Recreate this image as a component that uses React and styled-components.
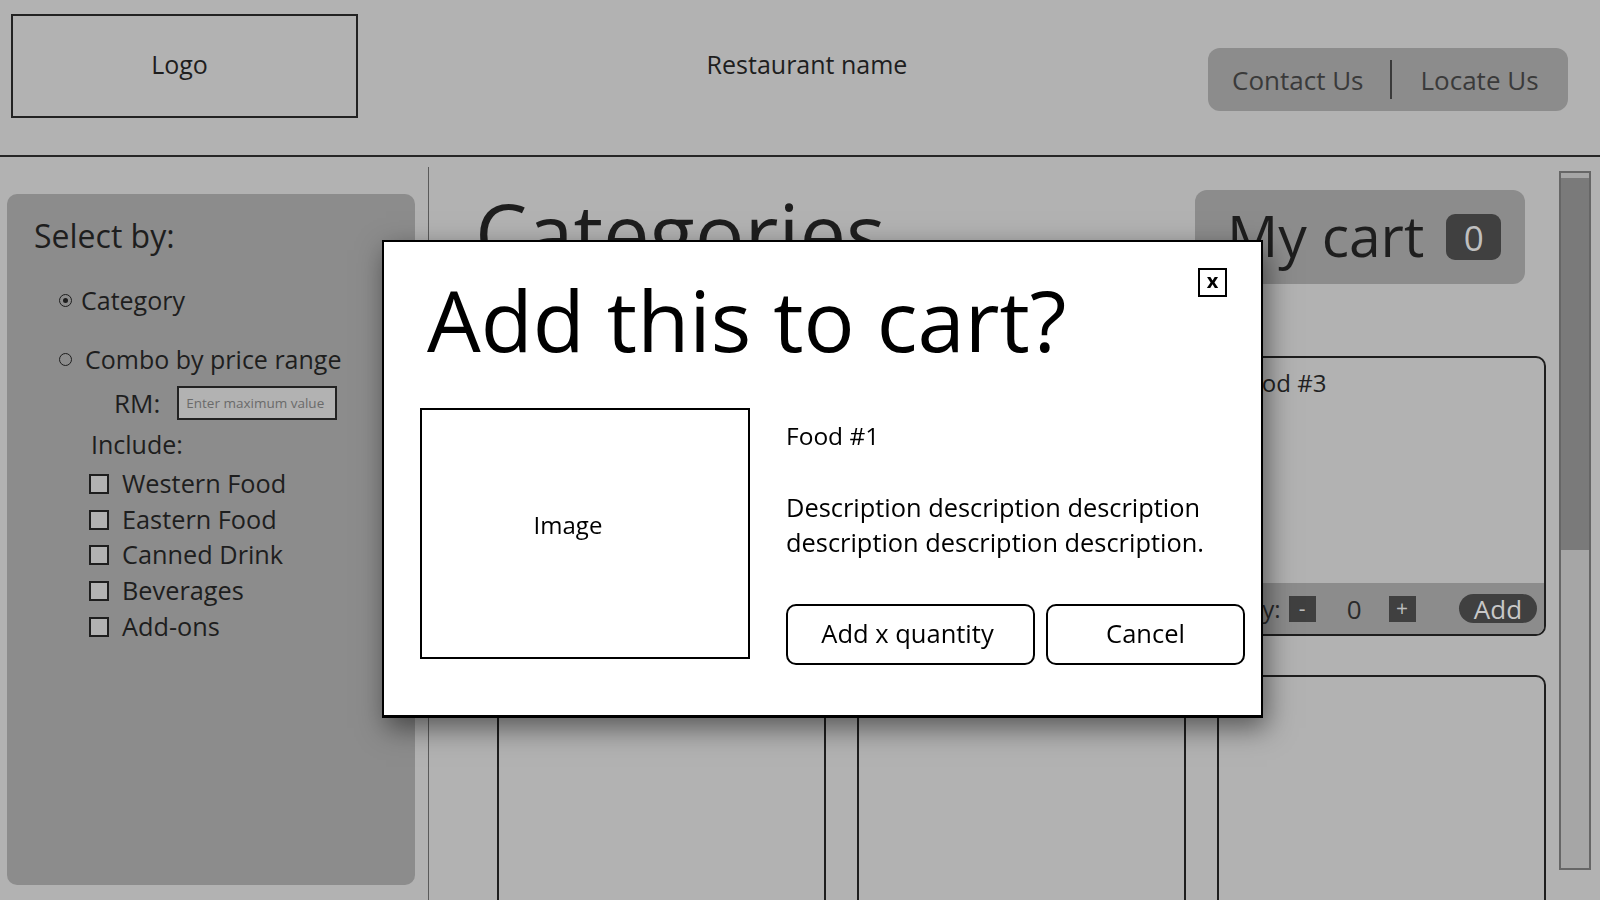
import React from "react";
import styled, { createGlobalStyle } from "styled-components";

const Global = createGlobalStyle`
  html, body {
    margin: 0;
    padding: 0;
    width: 1600px;
    height: 900px;
    overflow: hidden;
    background: #b2b2b2;
    font-family: "Open Sans", "Noto Sans", sans-serif;
    color: #1e1e1e;
  }
  * { box-sizing: border-box; }
`;

const Page = styled.div`
  width: 1600px;
  height: 900px;
  display: flex;
  flex-direction: column;
  position: relative;
  overflow: hidden;
`;

const Header = styled.header`
  height: 157px;
  flex: none;
  display: grid;
  grid-template-columns: 347px 1fr 360px;
  align-items: start;
  padding: 0 32px 0 11px;
  border-bottom: 2px solid #262626;
`;

const LogoBox = styled.div`
  margin-top: 14px;
  height: 104px;
  border: 2px solid #222;
  display: flex;
  align-items: center;
  justify-content: center;
  padding: 0 10px 5px 0;
  font-size: 25px;
`;

const BrandName = styled.div`
  margin-top: 14px;
  height: 104px;
  display: flex;
  align-items: center;
  justify-content: center;
  padding: 0 0 5px 48px;
  font-size: 25px;
`;

const NavPill = styled.nav`
  margin-top: 48px;
  height: 63px;
  background: #8c8c8c;
  border-radius: 12px;
  display: flex;
  align-items: center;
  padding-left: 24px;
  font-size: 26px;
  color: #3a3a3a;
`;

const NavLink = styled.span``;

const NavDivider = styled.span`
  width: 2px;
  height: 39px;
  background: #3a3a3a;
  margin: 0 29px 0 26px;
`;

const Body = styled.div`
  flex: 1;
  min-height: 0;
  display: flex;
`;

const Sidebar = styled.aside`
  width: 408px;
  margin: 37px 0 15px 7px;
  border-radius: 10px;
  background: #8c8c8c;
  padding: 22px 0 0 27px;
  display: flex;
  flex-direction: column;
  align-items: flex-start;
`;

const SideTitle = styled.div`
  font-size: 32px;
  line-height: 40px;
`;

const RadioRow = styled.div`
  display: flex;
  align-items: center;
  gap: ${(p) => p.$gap}px;
  margin: ${(p) => p.$top}px 0 0 25px;
  font-size: 25px;
  line-height: 32px;
`;

const Radio = styled.span`
  width: 13px;
  height: 13px;
  border: 1.6px solid #1e1e1e;
  border-radius: 50%;
  display: flex;
  align-items: center;
  justify-content: center;
  flex: none;
  &::after {
    content: "";
    width: 5px;
    height: 5px;
    border-radius: 50%;
    background: ${(p) => (p.$checked ? "#1e1e1e" : "transparent")};
  }
`;

const PriceRow = styled.div`
  display: flex;
  align-items: center;
  margin: 10px 0 0 80px;
  font-size: 26px;
  gap: 17px;
`;

const PriceInput = styled.div`
  width: 160px;
  height: 34px;
  border: 2px solid #222;
  background: #b2b2b2;
  font-size: 13.5px;
  color: #6a6a6a;
  display: flex;
  align-items: center;
  padding-left: 7px;
`;

const IncludeLabel = styled.div`
  margin: 7px 0 0 57px;
  font-size: 25px;
  line-height: 32px;
`;

const CheckList = styled.div`
  margin: 6px 0 0 55px;
  display: flex;
  flex-direction: column;
`;

const CheckRow = styled.div`
  display: flex;
  align-items: center;
  gap: 13px;
  font-size: 25.3px;
  line-height: 35.7px;
  height: 35.7px;
`;

const CheckBox = styled.span`
  width: 20px;
  height: 20px;
  border: 2px solid #1e1e1e;
  background: #b2b2b2;
  flex: none;
`;

const Main = styled.main`
  flex: 1;
  margin: 10px 0 0 13px;
  border-left: 1px solid #5a5a5a;
  display: flex;
  min-width: 0;
`;

const Content = styled.div`
  flex: 1;
  display: flex;
  flex-direction: column;
  min-width: 0;
`;

const TopRow = styled.div`
  display: flex;
  justify-content: space-between;
  align-items: flex-start;
  padding: 23px 21px 0 0;
`;

const Heading = styled.h1`
  margin: -5px 0 0 46px;
  font-size: 83px;
  line-height: 94px;
  font-weight: 400;
  color: #1e1e1e;
`;

const CartPill = styled.div`
  width: 330px;
  height: 94px;
  background: #8c8c8c;
  border-radius: 12px;
  display: flex;
  align-items: center;
  padding-left: 32px;
  gap: 22px;
`;

const CartText = styled.span`
  font-size: 57px;
  color: #1e1e1e;
  margin-bottom: 5px;
`;

const CartBadge = styled.span`
  width: 55px;
  height: 46px;
  border-radius: 9px;
  background: #404040;
  color: #bfbfbf;
  font-size: 35px;
  display: flex;
  align-items: center;
  justify-content: center;
`;

const Grid = styled.div`
  margin-top: 72px;
  padding-left: 68px;
  display: grid;
  grid-template-columns: repeat(3, 329px);
  grid-auto-rows: 280px;
  column-gap: 31px;
  row-gap: 39px;
`;

const Card = styled.div`
  border: 2px solid #1e1e1e;
  border-radius: 10px;
  display: flex;
  flex-direction: column;
  overflow: hidden;
`;

const CardTitle = styled.div`
  padding: 10px 0 0 16px;
  font-size: 24px;
  line-height: 30px;
  color: #222;
  flex: 1;
`;

const CardBar = styled.div`
  height: 51px;
  background: #8c8c8c;
  display: flex;
  align-items: center;
  padding: 0 7px 0 16px;
  font-size: 24px;
  color: #2a2a2a;
`;

const QtyLabel = styled.span`
  margin-right: 8px;
`;

const StepButton = styled.span`
  width: 27px;
  height: 26px;
  background: #404040;
  color: #bdbdbd;
  font-size: 21px;
  line-height: 1;
  display: flex;
  align-items: center;
  justify-content: center;
`;

const Count = styled.span`
  width: 73px;
  text-align: center;
  font-size: 26px;
  padding-left: 4px;
`;

const AddButton = styled.span`
  margin-left: auto;
  width: 78px;
  height: 29px;
  border-radius: 15px;
  background: #404040;
  color: #c8c8c8;
  font-size: 26px;
  display: flex;
  align-items: center;
  justify-content: center;
`;

const Scrollbar = styled.div`
  width: 32px;
  height: 699px;
  margin: 4px 9px 0 13px;
  flex: none;
  border: 2px solid #666;
  background: #a6a6a6;
  padding-top: 5px;
`;

const Thumb = styled.div`
  height: 372px;
  background: #7a7a7a;
`;

const Overlay = styled.div`
  position: fixed;
  inset: 0;
`;

const Modal = styled.div`
  position: absolute;
  left: 382px;
  top: 240px;
  width: 881px;
  height: 478px;
  background: #fff;
  border: 2px solid #000;
  border-bottom-width: 3px;
  box-shadow: 4px 10px 26px rgba(0, 0, 0, 0.5);
  padding: 27px 16px 0 36px;
  color: #000;
`;

const CloseBox = styled.span`
  position: absolute;
  top: 26px;
  right: 34px;
  width: 29px;
  height: 29px;
  border: 2px solid #000;
  display: flex;
  align-items: center;
  justify-content: center;
  font-size: 20px;
  font-weight: 700;
  line-height: 1;
  padding-bottom: 3px;
`;

const ModalTitle = styled.h2`
  margin: 0 0 0 7px;
  font-size: 85px;
  line-height: 100px;
  font-weight: 400;
`;

const ModalRow = styled.div`
  margin-top: 39px;
  display: flex;
`;

const ImageBox = styled.div`
  width: 330px;
  height: 251px;
  border: 2px solid #000;
  display: flex;
  align-items: center;
  justify-content: center;
  padding: 0 34px 18px 0;
  font-size: 24px;
`;

const Details = styled.div`
  margin-left: 36px;
  width: 459px;
  display: flex;
  flex-direction: column;
`;

const FoodName = styled.div`
  margin-top: 13px;
  font-size: 24.5px;
  line-height: 30px;
`;

const Description = styled.p`
  margin: 39px 0 0;
  font-size: 25.4px;
  line-height: 35px;
`;

const Actions = styled.div`
  margin-top: 44px;
  display: flex;
  gap: 11px;
`;

const ActionButton = styled.span`
  width: ${(p) => p.$w}px;
  height: 61px;
  border: 2px solid #000;
  border-radius: 10px;
  display: flex;
  align-items: center;
  justify-content: center;
  font-size: 25.5px;
  padding: 0 ${(p) => p.$shift}px 3px 0;
`;

const categories = ["Western Food", "Eastern Food", "Canned Drink", "Beverages", "Add-ons"];
const foods = [1, 2, 3];
const placeholders = [4, 5, 6];

export default function App() {
  return (
    <Page>
      <Global />
      <Header>
        <LogoBox>Logo</LogoBox>
        <BrandName>Restaurant name</BrandName>
        <NavPill>
          <NavLink>Contact Us</NavLink>
          <NavDivider />
          <NavLink>Locate Us</NavLink>
        </NavPill>
      </Header>
      <Body>
        <Sidebar>
          <SideTitle>Select by:</SideTitle>
          <RadioRow $top={28} $gap={9}>
            <Radio $checked />
            Category
          </RadioRow>
          <RadioRow $top={27} $gap={13}>
            <Radio />
            Combo by price range
          </RadioRow>
          <PriceRow>
            RM:
            <PriceInput>Enter maximum value</PriceInput>
          </PriceRow>
          <IncludeLabel>Include:</IncludeLabel>
          <CheckList>
            {categories.map((c) => (
              <CheckRow key={c}>
                <CheckBox />
                {c}
              </CheckRow>
            ))}
          </CheckList>
        </Sidebar>
        <Main>
          <Content>
            <TopRow>
              <Heading>Categories</Heading>
              <CartPill>
                <CartText>My cart</CartText>
                <CartBadge>0</CartBadge>
              </CartPill>
            </TopRow>
            <Grid>
              {foods.map((n) => (
                <Card key={n}>
                  <CardTitle>Food #{n}</CardTitle>
                  <CardBar>
                    <QtyLabel>Qty:</QtyLabel>
                    <StepButton>-</StepButton>
                    <Count>0</Count>
                    <StepButton>+</StepButton>
                    <AddButton>Add</AddButton>
                  </CardBar>
                </Card>
              ))}
              {placeholders.map((n) => (
                <Card key={n} />
              ))}
            </Grid>
          </Content>
          <Scrollbar>
            <Thumb />
          </Scrollbar>
        </Main>
      </Body>
      <Overlay>
        <Modal>
          <CloseBox>x</CloseBox>
          <ModalTitle>Add this to cart?</ModalTitle>
          <ModalRow>
            <ImageBox>Image</ImageBox>
            <Details>
              <FoodName>Food #1</FoodName>
              <Description>
                Description description description
                <br />
                description description description.
              </Description>
              <Actions>
                <ActionButton $w={249} $shift={6}>Add x quantity</ActionButton>
                <ActionButton $w={199} $shift={0}>Cancel</ActionButton>
              </Actions>
            </Details>
          </ModalRow>
        </Modal>
      </Overlay>
    </Page>
  );
}
